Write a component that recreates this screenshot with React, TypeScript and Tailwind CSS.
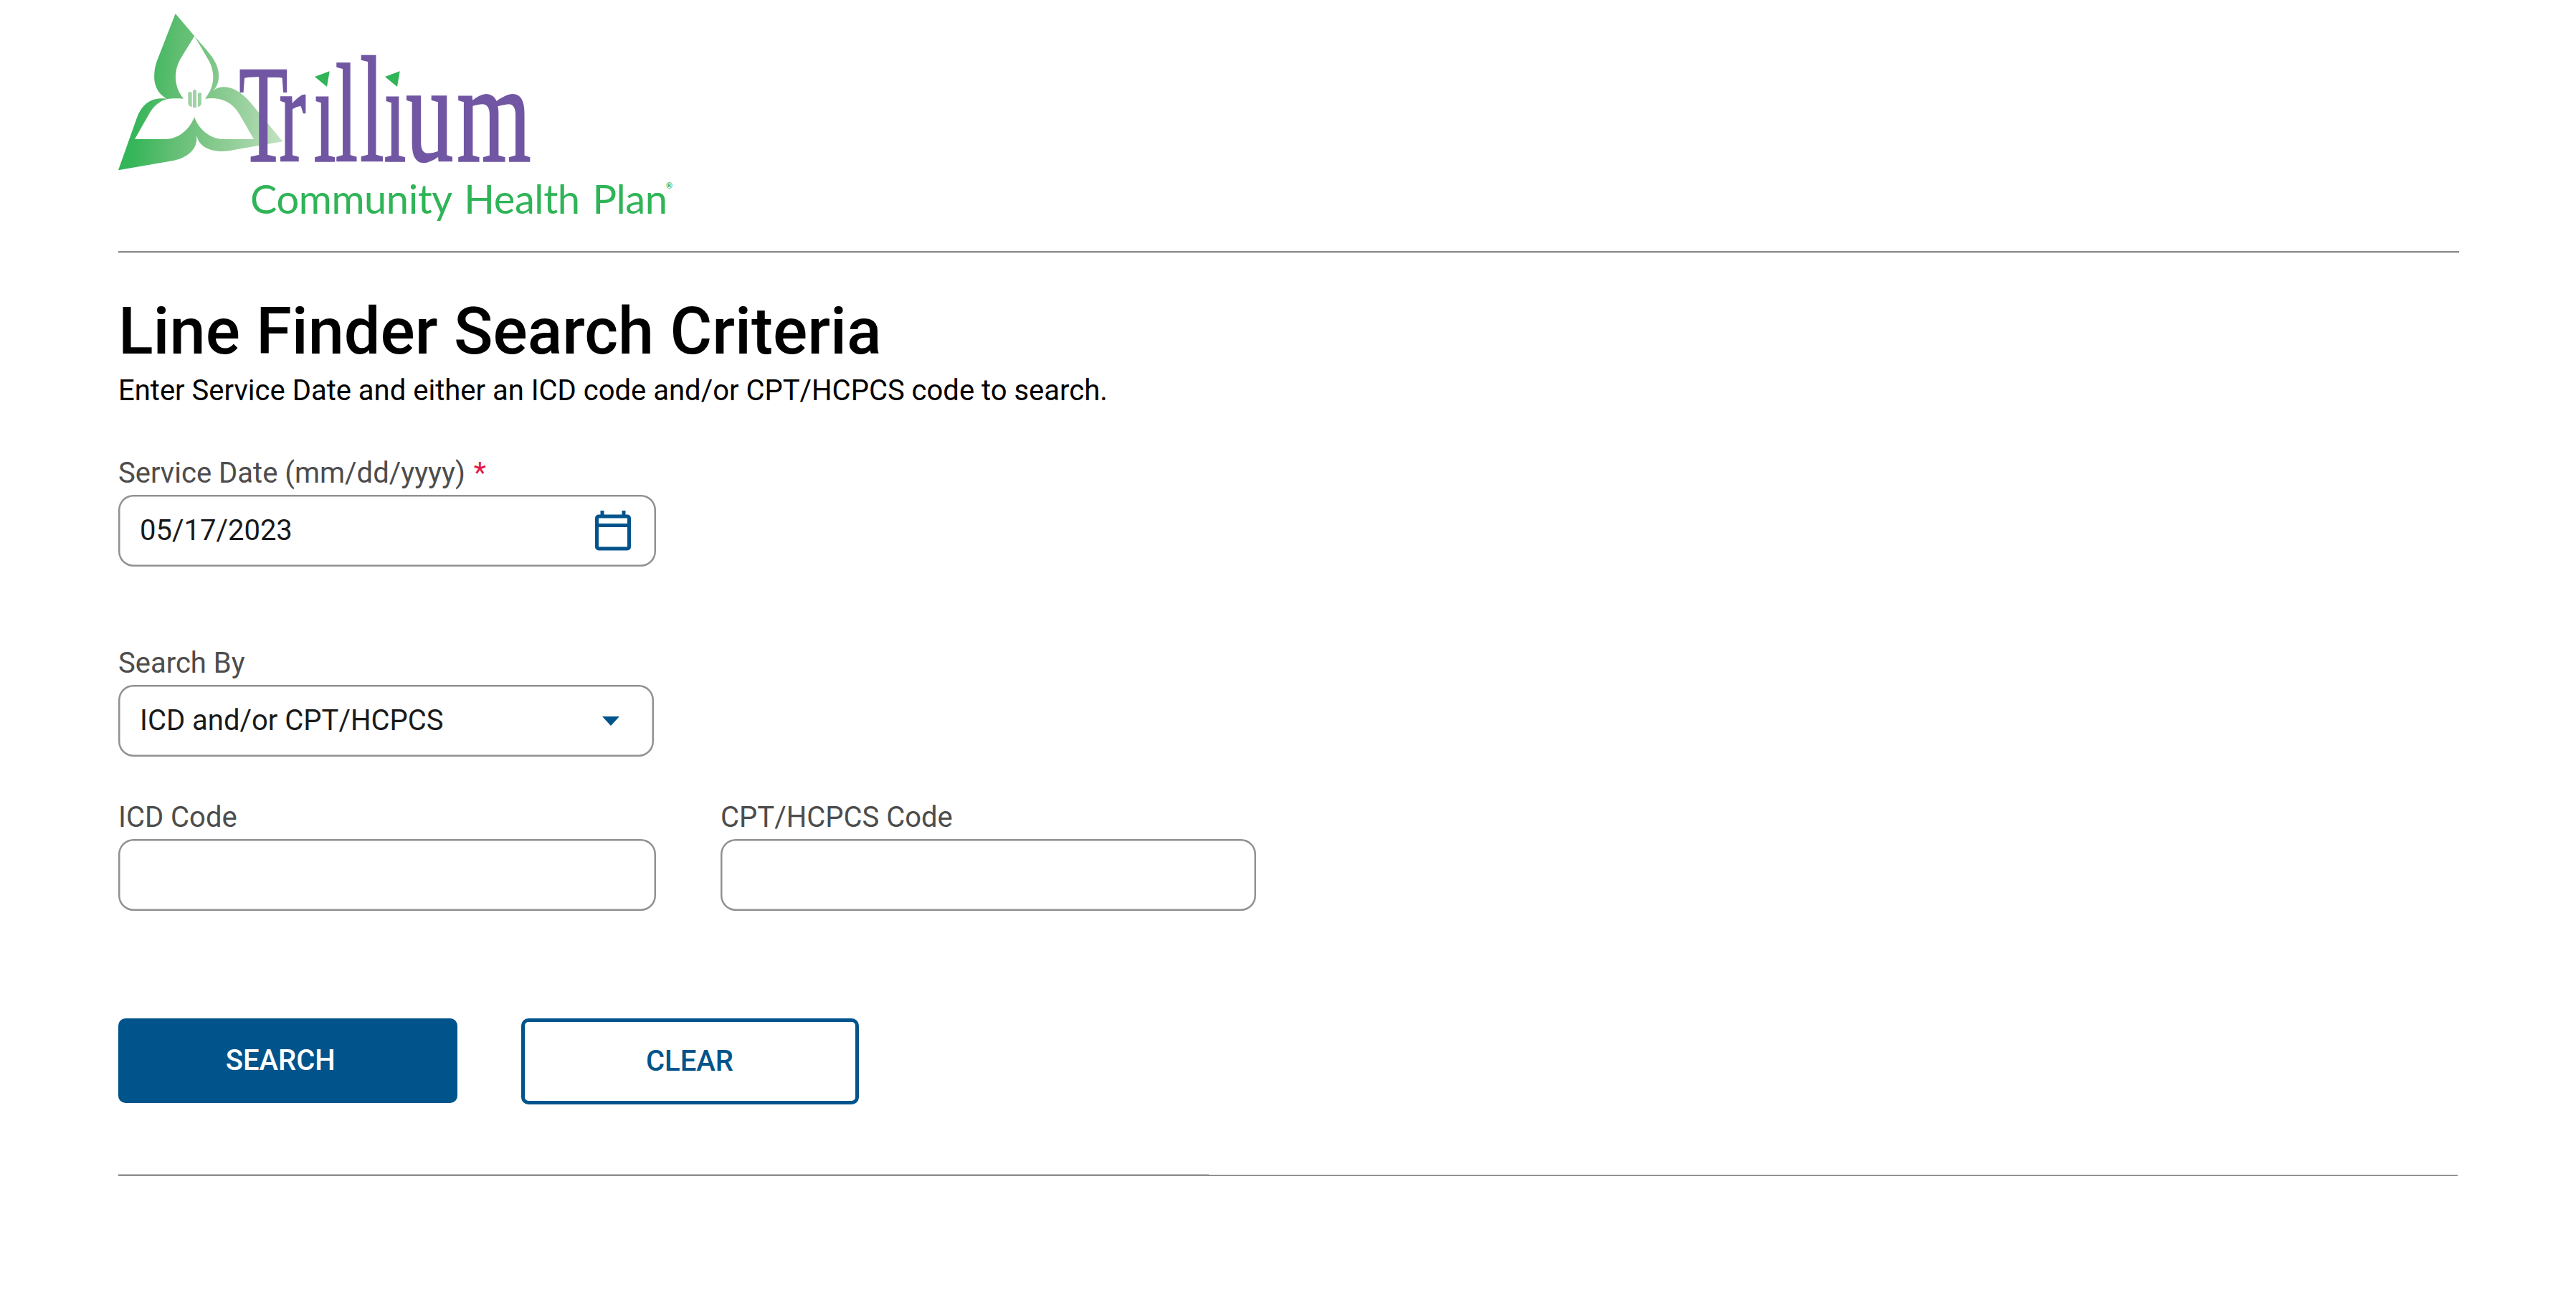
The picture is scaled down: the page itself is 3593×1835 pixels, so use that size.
import React from "react";

const box =
  "flex h-[100px] items-center rounded-[21px] bg-white pl-[30px] text-[40px] leading-[50px] text-[#1a1a1a] shadow-[inset_0_0_0_2.5px_#919191]";

function Logo() {
  return (
    <svg className="block h-[350px] w-[1000px]" viewBox="0 0 1000 350" role="img" aria-label="Trillium Community Health Plan">
      <defs>
        <linearGradient id="petal" gradientUnits="userSpaceOnUse" x1="45" y1="420" x2="733" y2="480">
          <stop offset="0" stopColor="#2fb457" />
          <stop offset="0.12" stopColor="#37b65a" />
          <stop offset="0.35" stopColor="#62be73" />
          <stop offset="0.6" stopColor="#85c98d" />
          <stop offset="0.8" stopColor="#9fd3a3" />
          <stop offset="1" stopColor="#c2e2c2" />
        </linearGradient>
        <clipPath id="stems">
          <path d="M320 60H437V126H468V60H535V126H567V60H780V250H320Z" />
        </clipPath>
      </defs>
      <g transform="translate(150 0) scale(0.33333)">
        <path
          fill="url(#petal)"
          fillRule="evenodd"
          d="M284 57L365 152C395 188 418 210 437 238C462 275 466 300 465 320C465 345 458 362 440 381C452 370 470 364 490 364C535 366 575 400 605 437L733 592L545 624C520 629 500 633 480 633C420 632 378 608 373 563V580C373 625 335 660 275 672L45 712L122 495C145 435 180 406 248 413C208 393 192 350 196 310C197 285 202 268 210 247ZM364 151L304 248C275 300 278 365 318 413C290 411 268 411 248 415C215 423 190 447 172 480L114 582H245C295 580 342 545 363 490C384 545 430 580 482 582H612L550 475C520 425 470 405 408 413C447 365 452 310 426 257Z"
        />
        <g fill="#9fd3a4">
          <path d="M337 392Q337 384 345 384T353 392V448Q340 444 337 434Z" />
          <path d="M357 383Q357 375 365 375T372 383V450H357Z" />
          <path d="M378 395Q378 387 386 387T393 395V434Q390 444 378 448Z" />
        </g>
      </g>
      <g fill="#7157a3" stroke="#7157a3" strokeWidth="2.500" fontFamily="'Liberation Serif', serif" clipPath="url(#stems)">
        <text transform="translate(333.3 224) scale(0.58 1)" fontSize="192" y="0" x="0 97 179.5">
          Tri
          <tspan fontSize="194" x="232">l</tspan>
          <tspan fontSize="209" x="291">l</tspan>
          <tspan x="348.5">i</tspan>
        </text>
        <text transform="translate(566 224) scale(0.685 1)" fontSize="194" x="0 104">
          um
        </text>
      </g>
      <path fill="#2fb457" d="M439 107L459.700 99.300L456 121ZM537 107L557.700 99.300L554 121Z" />
      <text x="349" y="298" fontFamily="Lato, sans-serif" fontSize="56" fill="#2fb457" textLength="582" wordSpacing="4">
        Community Health Plan
      </text>
      <text x="929" y="263" fontFamily="Lato, sans-serif" fontSize="11" fontWeight="700" fill="#2fb457">
        ®
      </text>
    </svg>
  );
}

function Field({ label, required, width, children }: { label: string; required?: boolean; width: string; children?: React.ReactNode }) {
  return (
    <div className={width}>
      <div className="mb-[5px] whitespace-nowrap pt-px text-[40px] leading-[50px] text-[#4d4d4d]">
        {label}
        {required && <span className="ml-0.5 text-[#e31b48]"> *</span>}
      </div>
      <div className={box}>{children}</div>
    </div>
  );
}

export default function App() {
  return (
    <main className="flex h-[1835px] w-[3593px] flex-col overflow-hidden bg-white font-['Roboto',sans-serif]">
      <header>
        <Logo />
        <div className="ml-[165px] h-[3px] w-[3265px] border-b border-[#c8c8c8] bg-[#919191]" />
      </header>
      <section className="pl-[165px] pt-[60px]">
        <h1 className="text-[90px] font-medium leading-[100px] text-black">Line Finder Search Criteria</h1>
        <p className="mt-[7px] text-[40px] leading-[50px] text-black">
          Enter Service Date and either an ICD code and/or CPT/HCPCS code to search.
        </p>
        <div className="mt-16">
          <Field label="Service Date (mm/dd/yyyy)" required width="w-[750px]">
            05/17/2023
            <svg className="ml-auto mr-[35px] h-[56px] w-[50px]" viewBox="0 0 50 56" fill="none" stroke="#00548b">
              <rect x="2.500" y="8" width="45" height="45" rx="2.500" strokeWidth="5" />
              <path d="M2 20.500H48M10 0V8M40 0V8" strokeWidth="5" />
            </svg>
          </Field>
        </div>
        <div className="mt-[109px]">
          <Field label="Search By" width="w-[747px]">
            ICD and/or CPT/HCPCS
            <svg className="ml-auto mr-12 h-[13px] w-6" viewBox="0 0 24 13" fill="#00548b">
              <path d="M0 0H24L12 13Z" />
            </svg>
          </Field>
        </div>
        <div className="mt-[59px] flex gap-[90px]">
          <Field label="ICD Code" width="w-[750px]" />
          <Field label="CPT/HCPCS Code" width="w-[747px]" />
        </div>
        <div className="mt-[150px] flex items-start gap-[89px]">
          <button className="h-[117.5px] w-[472.5px] rounded-[10px] bg-[#00548b] pr-5 text-[40px] font-medium leading-[50px] text-white">
            SEARCH
          </button>
          <button className="h-[120px] w-[471px] rounded-[10px] border-[5px] border-[#00548b] bg-white text-[40px] font-medium leading-[50px] text-[#00548b]">
            CLEAR
          </button>
        </div>
      </section>
      <div className="ml-[165px] mt-[97px] flex items-end">
        <div className="h-[3px] w-[1521px] border-t border-[#c0c0c0] bg-[#919191]" />
        <div className="h-[2px] w-[1742px] bg-[#919191]" />
      </div>
    </main>
  );
}
